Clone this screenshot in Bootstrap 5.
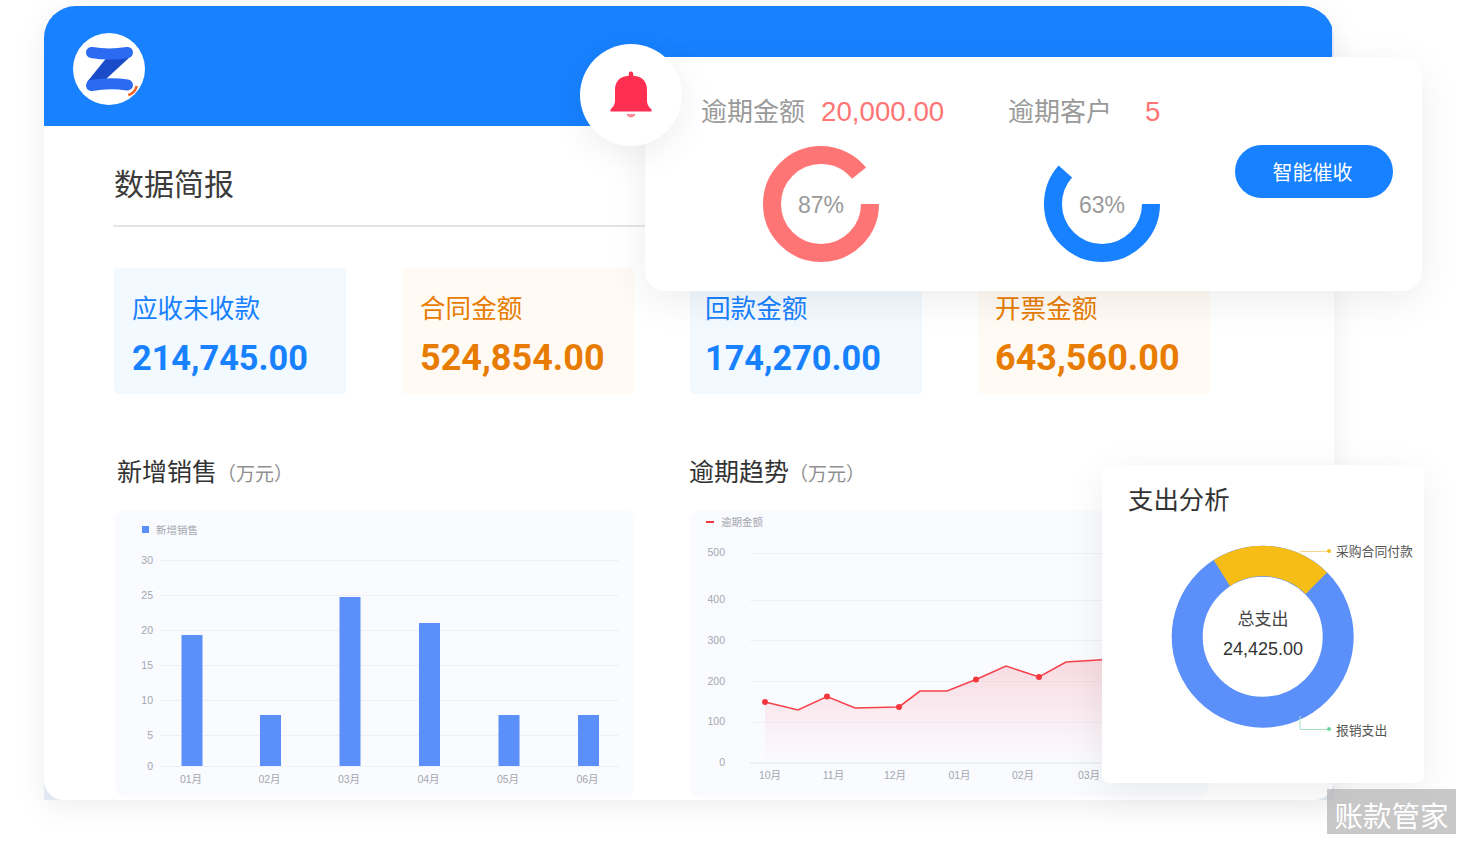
<!DOCTYPE html>
<html lang="zh-CN">
<head>
<meta charset="utf-8">
<title>数据简报</title>
<link href="https://cdn.jsdelivr.net/npm/bootstrap@5.3.0/dist/css/bootstrap.min.css" rel="stylesheet">
<style>
html,body{margin:0;width:1464px;height:842px;overflow:hidden;background:#fff;}
body{font-family:"Liberation Sans","Noto Sans CJK SC",sans-serif;color:#333;}
.stage{width:1464px;height:842px;padding:6px 0 0 44px;}
.sheet{width:1290px;height:794px;border-radius:32px 32px 0 0;background:#e2e9f4;overflow:hidden;box-shadow:0 6px 32px rgba(0,0,0,.07);}
.band{height:119.5px;background:#1781ff;width:1288px;padding:27px 0 0 29px;}
.sheet-body{height:674.5px;background:#fff;border-radius:0 0 20px 20px;padding:39.5px 0 0 69px;}
.brief-title{font-size:30px;line-height:40px;margin:0;color:#3b3b3b;font-weight:400;padding-left:1px;}
.brief-rule{height:2px;background:#e5e5e5;width:560px;margin:20px 0 41px;}
.kpi-row{gap:56px;padding-left:1px;}
.kpi{width:232px;height:126px;border-radius:4px;padding:23px 0 0 18px;}
.kpi-tight{padding-left:15px;}
.kpi-mid{padding-left:17px;}
.kpi-blue{background:#f3faff;color:#1781ff;}
.kpi-orange{background:#fffaf4;color:#e87c00;}
.kpi-label{font-size:25.6px;line-height:36px;}
.kpi-num{font-family:Roboto,sans-serif;font-weight:700;font-size:34.3px;line-height:44px;margin-top:9px;}
.kpi-orange .kpi-num{font-size:36px;}
.chart-row{gap:56px;margin-top:60px;padding-left:2px;}
.chart-col{width:519px;}
.chart-head{font-size:25px;line-height:36px;color:#333;height:38px;padding-left:2px;}
.chart-head span{font-size:19px;color:#8f8f8f;}
.chart-box{width:519px;height:287px;background:#fafbff;border-radius:10px;margin-top:18px;display:block;}
.chart-col-b .chart-head{padding-left:0;margin-left:-1px;}
.axis{font-family:"Liberation Sans","Noto Sans CJK SC",sans-serif;font-size:10.5px;fill:#a3a7ae;}
.panel{position:absolute;left:645px;top:57px;width:777px;height:234px;background:#fff;border-radius:20px;box-shadow:0 10px 40px rgba(0,0,0,.07);padding:36px 0 0 56px;}
.panel-col{width:307px;}
.due{height:38px;font-size:26px;line-height:38px;color:#9a9a9a;white-space:nowrap;}
.due b{font-weight:400;font-size:27.7px;color:#ff7575;}
.due-a b{margin-left:16px;}
.due-b b{margin-left:33px;}
.ring{display:block;margin-top:14px;}
.ring text{font-family:"Liberation Sans",sans-serif;font-size:23px;fill:#9a9a9a;}
.ring-a{margin-left:61px;}
.ring-b{margin-left:35px;}
.smart-btn{width:158px;height:53px;border-radius:27px;background:#1781ff;color:#fff;font-size:20px;line-height:57px;padding:0 3px 0 0;border:0;margin:52px 0 0 -80px;}
.smart-btn:hover{background:#1781ff;color:#fff;}
.bell-disc{position:absolute;left:580px;top:44px;width:102px;height:102px;border-radius:50%;background:#fff;box-shadow:0 8px 36px rgba(0,0,0,.07);}
.bell-glyph{filter:blur(.6px);}
.spend{position:absolute;left:1102px;top:465px;width:322px;height:318px;background:#fff;border-radius:8px;box-shadow:0 10px 40px rgba(0,0,0,.07);}
.spend-title{font-size:25.4px;line-height:36px;color:#333;margin:0;padding:17px 0 0 26px;font-weight:400;}
.spend svg{position:absolute;left:0;top:0;}
.spend svg text{font-family:"Liberation Sans","Noto Sans CJK SC",sans-serif;}
.stamp{position:absolute;left:1327px;top:789px;width:129px;height:45px;background:rgba(182,182,182,.75);color:#fff;font-size:28.5px;line-height:56px;text-align:center;white-space:nowrap;}
</style>
</head>
<body>
<div class="stage position-relative">
  <div class="sheet">
    <div class="band">
      <svg width="74" height="74" viewBox="0 0 74 74" class="d-block">
        <circle cx="36" cy="36" r="36" fill="#fff"/>
        <path d="M35 23 L58 23 L32 47 L14 49 Z" fill="#1a4bc9"/>
        <path d="M18.500 19.500 Q36 22.500 54.500 19.500" fill="none" stroke="#2a6bf2" stroke-width="11" stroke-linecap="round"/>
        <path d="M18.500 52.500 Q36 49.500 54.500 52" fill="none" stroke="#2a6bf2" stroke-width="11" stroke-linecap="round"/>
        <path d="M55.300 62 Q62 60 63.700 53" fill="none" stroke="#f4602a" stroke-width="2.6"/>
      </svg>
    </div>
    <div class="sheet-body">
      <h2 class="brief-title">数据简报</h2>
      <div class="brief-rule"></div>
      <div class="kpi-row d-flex">
        <div class="kpi kpi-blue"><div class="kpi-label">应收未收款</div><div class="kpi-num">214,745.00</div></div>
        <div class="kpi kpi-orange"><div class="kpi-label">合同金额</div><div class="kpi-num">524,854.00</div></div>
        <div class="kpi kpi-blue kpi-tight"><div class="kpi-label">回款金额</div><div class="kpi-num">174,270.00</div></div>
        <div class="kpi kpi-orange kpi-mid"><div class="kpi-label">开票金额</div><div class="kpi-num">643,560.00</div></div>
      </div>
      <div class="chart-row d-flex">
        <div class="chart-col">
          <div class="chart-head">新增销售<span>（万元）</span></div>
          <svg class="chart-box" viewBox="115 510 519 287">
            <rect x="142" y="526" width="7" height="7" fill="#5b8ffa"/>
            <text class="axis" x="156" y="533.5">新增销售</text>
            <g stroke="#eef0f6" stroke-width="1">
              <line x1="160" x2="619" y1="560.5" y2="560.5"/><line x1="160" x2="619" y1="595.5" y2="595.5"/>
              <line x1="160" x2="619" y1="630.5" y2="630.5"/><line x1="160" x2="619" y1="665.5" y2="665.5"/>
              <line x1="160" x2="619" y1="700.5" y2="700.5"/><line x1="160" x2="619" y1="735.5" y2="735.5"/>
              <line x1="160" x2="619" y1="766.5" y2="766.5"/>
            </g>
            <g fill="#5b8ffa">
              <rect x="181.5" y="635" width="21" height="131"/><rect x="260" y="715" width="21" height="51"/>
              <rect x="339.5" y="597" width="21" height="169"/><rect x="419" y="623" width="21" height="143"/>
              <rect x="498.5" y="715" width="21" height="51"/><rect x="578" y="715" width="21" height="51"/>
            </g>
            <g class="axis" text-anchor="end">
              <text class="axis" x="153" y="564">30</text><text class="axis" x="153" y="599">25</text>
              <text class="axis" x="153" y="634">20</text><text class="axis" x="153" y="669">15</text>
              <text class="axis" x="153" y="704">10</text><text class="axis" x="153" y="739">5</text>
              <text class="axis" x="153" y="770">0</text>
            </g>
            <g text-anchor="middle">
              <text class="axis" x="191" y="783">01月</text><text class="axis" x="269.5" y="783">02月</text>
              <text class="axis" x="349" y="783">03月</text><text class="axis" x="428.5" y="783">04月</text>
              <text class="axis" x="508" y="783">05月</text><text class="axis" x="587.5" y="783">06月</text>
            </g>
          </svg>
        </div>
        <div class="chart-col chart-col-b">
          <div class="chart-head">逾期趋势<span>（万元）</span></div>
          <svg class="chart-box" viewBox="690 510 519 287">
            <defs><linearGradient id="fade" x1="0" y1="0" x2="0" y2="1"><stop offset="0" stop-color="#f5a5b0" stop-opacity=".38"/><stop offset="1" stop-color="#f5a5b0" stop-opacity="0"/></linearGradient></defs>
            <rect x="706" y="521" width="8" height="2" fill="#f5383f"/>
            <text class="axis" x="721" y="525.5">逾期金额</text>
            <g stroke="#eef0f6">
              <line x1="750" x2="1205" y1="553.5" y2="553.5"/><line x1="750" x2="1205" y1="600.5" y2="600.5"/>
              <line x1="750" x2="1205" y1="640.5" y2="640.5"/><line x1="750" x2="1205" y1="681.5" y2="681.5"/>
              <line x1="750" x2="1205" y1="722.5" y2="722.5"/><line x1="750" x2="1205" y1="763" y2="763" stroke-width="2"/>
            </g>
            <path d="M765 702 L798 710 L827 696.5 L855 708 L899 707 L920 691 L947 691 L976 679.5 L1006 666 L1039 677 L1066 662 L1102 659.7 L1130 658 V763 H765 Z" fill="url(#fade)"/>
            <path d="M765 702 L798 710 L827 696.5 L855 708 L899 707 L920 691 L947 691 L976 679.5 L1006 666 L1039 677 L1066 662 L1102 659.7 L1130 658" fill="none" stroke="#f5424a" stroke-width="1.6"/>
            <g fill="#f5383f"><circle cx="765" cy="702" r="3"/><circle cx="827" cy="696.5" r="3"/><circle cx="899" cy="707" r="3"/><circle cx="976" cy="679.5" r="3"/><circle cx="1039" cy="677" r="3"/></g>
            <g text-anchor="end">
              <text class="axis" x="725" y="556">500</text><text class="axis" x="725" y="603">400</text>
              <text class="axis" x="725" y="644">300</text><text class="axis" x="725" y="685">200</text>
              <text class="axis" x="725" y="725">100</text><text class="axis" x="725" y="766">0</text>
            </g>
            <g text-anchor="middle">
              <text class="axis" x="770" y="779">10月</text><text class="axis" x="833.5" y="779">11月</text>
              <text class="axis" x="895" y="779">12月</text><text class="axis" x="959.5" y="779">01月</text>
              <text class="axis" x="1023" y="779">02月</text><text class="axis" x="1089" y="779">03月</text>
            </g>
          </svg>
        </div>
      </div>
    </div>
  </div>

  <div class="panel d-flex">
    <div class="panel-col">
      <div class="due due-a">逾期金额<b>20,000.00</b></div>
      <svg class="ring ring-a" width="118" height="118" viewBox="0 0 118 118">
        <circle cx="59" cy="59" r="49" fill="none" stroke="#ff7575" stroke-width="18" pathLength="360" stroke-dasharray="321 360"/>
        <text x="59" y="68" text-anchor="middle">87%</text>
      </svg>
    </div>
    <div class="panel-col">
      <div class="due due-b">逾期客户<b>5</b></div>
      <svg class="ring ring-b" width="118" height="118" viewBox="0 0 118 118">
        <circle cx="59" cy="59" r="49" fill="none" stroke="#1781ff" stroke-width="18" pathLength="360" stroke-dasharray="221.5 360"/>
        <text x="59" y="68" text-anchor="middle">63%</text>
      </svg>
    </div>
    <button type="button" class="btn smart-btn">智能催收</button>
  </div>

  <div class="bell-disc d-flex align-items-center justify-content-center">
    <svg class="bell-glyph" width="44" height="50" viewBox="0 0 44 50">
      <path d="M22 1.500 C20.400 1.500 19.800 2.800 19.800 4.500 L19.800 5.800 C10.500 6.500 6 11.500 6 20 L6 30 C6 35 4 37 1.500 39.500 L1.500 41.500 L42.500 41.500 L42.500 39.500 C40 37 38 35 38 30 L38 20 C38 11.500 33.500 6.500 24.200 5.800 L24.200 4.500 C24.200 2.800 23.600 1.500 22 1.500 Z" fill="#ff2f52"/>
      <path d="M17.500 44 L26.500 44 C25.500 48.500 18.500 48.500 17.500 44 Z" fill="#ff8a9c"/>
    </svg>
  </div>

  <div class="spend">
    <h3 class="spend-title">支出分析</h3>
    <svg width="322" height="318" viewBox="1102 465 322 318">
      <circle cx="1262.7" cy="636.7" r="75.500" fill="none" stroke="#5b8ffa" stroke-width="31"/>
      <path d="M1213.700 560 A91 91 0 0 1 1327 572.500 L1305.700 594 A60 60 0 0 0 1230 586 Z" fill="#f6bd16"/>
      <path d="M1300 554 V551.500 H1329" fill="none" stroke="#f6d98a" stroke-width="1"/>
      <circle cx="1329" cy="551" r="2" fill="#f6bd16"/>
      <path d="M1300 716 V729.500 H1329" fill="none" stroke="#a5e3c2" stroke-width="1"/>
      <circle cx="1329" cy="729" r="2" fill="#6bd69f"/>
      <text x="1336" y="556" font-size="12.800" fill="#555">采购合同付款</text>
      <text x="1336" y="735" font-size="12.800" fill="#555">报销支出</text>
      <text x="1263" y="625" font-size="17" fill="#444" text-anchor="middle">总支出</text>
      <text x="1263" y="655" font-size="18" fill="#333" text-anchor="middle">24,425.00</text>
    </svg>
  </div>

  <div class="stamp">账款管家</div>
</div>
<script src="https://cdn.jsdelivr.net/npm/bootstrap@5.3.0/dist/js/bootstrap.bundle.min.js"></script>
</body>
</html>
